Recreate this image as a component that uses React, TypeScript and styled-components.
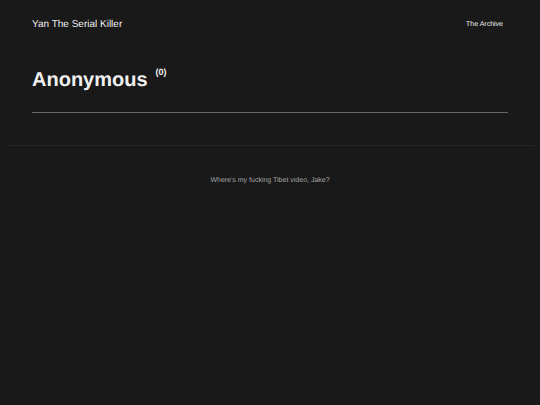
import React from 'react';
import styled, {createGlobalStyle} from "styled-components";

const App = () => {
    return (
        <>
            <GlobalStyle/>
            <Header>
                <SiteTitle href="#home">Yan The Serial Killer</SiteTitle>
                <nav>
                    <NavItem href="#archive">The Archive</NavItem>
                </nav>
            </Header>
            <Main>
                <Heading>
                    Anonymous
                    <Count>(0)</Count>
                </Heading>
            </Main>
            <Footer>Where's my fucking Tibet video, Jake?</Footer>
        </>
    );
};

const GlobalStyle = createGlobalStyle`
    body {
        margin: 0;
        background: #191919;
        color: #f0f0f0;
        font-family: "Liberation Sans", Arial, sans-serif;
        text-rendering: geometricPrecision;
    }
`

const Header = styled.header`
    display: flex;
    align-items: center;
    justify-content: space-between;
    height: 48px;
    padding: 0 37px 0 32px;
`

const SiteTitle = styled.a`
    color: #f0f0f0;
    font-size: 10px;
    text-decoration: none;
`

const NavItem = styled.a`
    display: block;
    color: #f0f0f0;
    font-size: 7px;
    text-decoration: none;
`

const Main = styled.main`
    padding: 16px 32px 32px;
`

const Heading = styled.h1`
    display: flex;
    align-items: flex-start;
    gap: 8px;
    margin: 0;
    padding-bottom: 16px;
    border-bottom: 1px solid #666;
    font-size: 20px;
    line-height: 32px;
`

const Count = styled.span`
    font-size: 9px;
    line-height: 16px;
`

const Footer = styled.footer`
    margin: 0 6px;
    padding: 28px 0;
    border-top: 1px solid #262626;
    color: #a6a6a6;
    font-size: 7px;
    line-height: 14px;
    text-align: center;
`

export default App;
